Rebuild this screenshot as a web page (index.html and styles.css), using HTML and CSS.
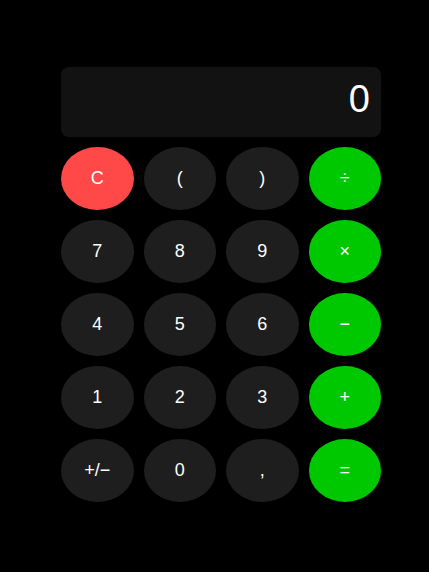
FILE: index.html
```html
<!DOCTYPE html>
<html>
<head>
<meta charset="utf-8">
<link rel="stylesheet" href="styles.css">
</head>
<body>
<div class="calc">
  <div class="display">0</div>
  <div class="keys">
    <button class="key clear">C</button>
    <button class="key">(</button>
    <button class="key">)</button>
    <button class="key op">÷</button>
    <button class="key">7</button>
    <button class="key">8</button>
    <button class="key">9</button>
    <button class="key op">×</button>
    <button class="key">4</button>
    <button class="key">5</button>
    <button class="key">6</button>
    <button class="key op">−</button>
    <button class="key">1</button>
    <button class="key">2</button>
    <button class="key">3</button>
    <button class="key op">+</button>
    <button class="key">+/−</button>
    <button class="key">0</button>
    <button class="key">,</button>
    <button class="key op">=</button>
  </div>
</div>
</body>
</html>
```
FILE: styles.css
```css
html, body {
  margin: 0;
  padding: 0;
  background: #000;
  height: 100%;
}
body {
  font-family: "Liberation Sans", Arial, sans-serif;
}
.calc {
  width: 320px;
  padding: 67px 0 0 61px;
  display: flex;
  flex-direction: column;
  gap: 10px;
}
.display {
  height: 70px;
  background: #121212;
  border-radius: 8px;
  color: #fff;
  font-size: 38px;
  display: flex;
  align-items: center;
  justify-content: flex-end;
  padding: 0 11px 5px;
  box-sizing: border-box;
}
.keys {
  display: grid;
  grid-template-columns: repeat(4, 1fr);
  grid-auto-rows: 63px;
  gap: 10px;
}
.key {
  border: none;
  border-radius: 50%;
  background: #1e1e1e;
  color: #fff;
  font-family: "Liberation Sans", Arial, sans-serif;
  font-size: 18px;
  padding: 0;
  margin: 0;
}
.key.clear {
  background: #ff4848;
}
.key.op {
  background: #00c800;
}
```
